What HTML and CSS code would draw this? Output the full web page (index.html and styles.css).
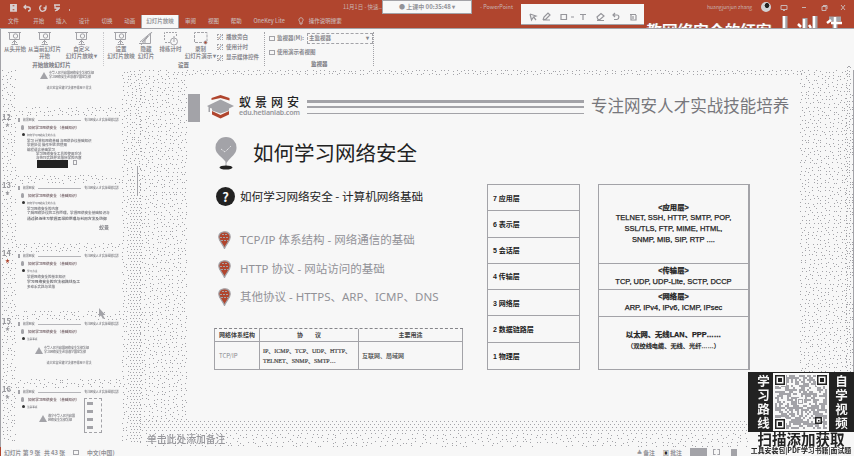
FILE: index.html
```html
<!DOCTYPE html>
<html lang="zh-CN">
<head>
<meta charset="utf-8">
<title>PowerPoint</title>
<link rel="stylesheet" href="styles.css">
</head>
<body>
<svg width="0" height="0" class="defs">
  <defs>
    <g id="screen" fill="none" stroke="#a3a3a8"><path d="M0 .5H13M1.5 1V7.5H11.5V1M6.5 8V12M3.5 12.5H10M4 11l2-2M9 11L7 9"/><circle cx="7.500" cy="4" r="2.200"/></g>
    <g id="balloon"><path fill="#b0452e" stroke="#a3a3a8" stroke-width="1.200" d="M6.500 .8C3 .8 .8 3 .8 6c0 4 3.500 6 5.700 11.500C8.700 12 12.200 10 12.200 6c0-3-2.200-5.200-5.700-5.200z"/><path stroke="#a3a3a8" stroke-width="1.200" stroke-dasharray="2 1" d="M2 6.500H11M4 3.500H9M3 9.500H10"/></g>
  </defs>
</svg>
<div class="app">
  <header class="top">
    <div class="quick">
      <svg width="70" height="10" fill="none" stroke="#d8cfd0" stroke-width="1.300"><path d="M.7 .7H6.300V7H.7zM2 1V3H5V1M2 7V4.500H5V7M16 1L14 3L16 5M14 3H18C21 3 21 7 18 7M36 1.500V4H33.500M35.500 3A3 3 0 1 1 31.500 1.500M44 1H50M45 1V4H50M47 4V7M45 7L49 5M59 6H60"/></svg>
      <span class="doc">11月1日 - 快速...</span><span class="docapp">- PowerPoint</span>
      <span class="user">huangjunjun zhang</span>
      <span class="avatar"></span>
      <svg class="winbtns" width="66" height="8" fill="none" stroke="#c9b5b3"><path d="M1 1.500H7V5.500H1zM3 6.500H5M22 3.500H26M42 2.500H46V6.500H42zM43 1.500H47V5M61 1L65 6M65 1L61 6"/></svg>
    </div>
    <nav class="tabs">
      <span>文件</span><span>开始</span><span>插入</span><span>设计</span><span>切换</span><span>动画</span><span class="active">幻灯片放映</span><span>审阅</span><span>视图</span><span>帮助</span><span class="onekey">OneKey Lite</span>
      <svg width="6" height="8" fill="none" stroke="#c9b5b3"><path d="M2 5C0 3 1 .8 3 .8S6 3 4 5V7H2z"/></svg><span class="tell">操作说明搜索</span>
    </nav>
    <div class="banner"><span>教网络安全的红客</span>
      <svg width="66" height="14"><path stroke="#a3a3a8" stroke-width="5" d="M5 1V14M25 3V14M35 1V14M49 4H61M55 3V14"/><path stroke="#fff" stroke-width="2.500" d="M4 1V14M24 4V14M18 9l3 3M29 10l2 3M34 1V14M47 8l4-3M55 2V14M51 8H62"/></svg></div>
  </header>
  <div class="meeting">● 上课中 00:35:48 ▾</div>
  <div class="annot"><svg width="123" height="20" fill="none" stroke="#96969b" stroke-width="1.200"><path d="M9 10L15 12L12.500 13L15 16M9 10L10.500 16L12.500 13M22 16L23 13L27 9L29 11L25 15L22 16H29M40 10.500H45.500V15.500H40zM50 13H53M59 10.500H65M62 10V16M76 13L80 9.500L83 12L79 15.500H77zM76 16.500H83M94 9L92 11L94 13M92 11H96C98.500 11 98.500 15 96 15.500H93M109 10.500H115M110 11V16H115V11M112 12V15"/></svg></div>

  <section class="ribbon">
    <div class="cmd c1"><svg width="14" height="14"><use href="#screen"/></svg><p>从头开始</p></div>
    <div class="cmd c2"><svg width="14" height="14"><use href="#screen"/></svg><p>从当前幻灯片<br>开始</p><b>开始放映幻灯片</b></div>
    <div class="cmd c3"><svg width="14" height="14"><use href="#screen"/></svg><p>自定义<br>幻灯片放映 ▾</p></div>
    <i class="sep s1"></i>
    <div class="cmd c4"><svg width="14" height="14"><use href="#screen"/></svg><p>设置<br>幻灯片放映</p></div>
    <div class="cmd c5"><svg width="14" height="14" fill="none" stroke="#a3a3a8"><path d="M0 11.500H11.500V1L1 10M3 10L9 4M6 8V11M13 0L2 13"/></svg><p>隐藏<br>幻灯片</p></div>
    <div class="cmd c6"><svg width="14" height="14" fill="none" stroke="#a3a3a8"><path stroke-dasharray="2 1" d="M.5 8V.5H12.500V5M1 10.500H6"/><circle cx="10" cy="9.500" r="3.500"/><path d="M10 7V10M9 5H11"/></svg><p>排练计时</p></div>
    <div class="cmd c7"><svg width="14" height="14" fill="none" stroke="#a3a3a8"><path stroke-dasharray="3 1" d="M.5 10V.5H13V9M1 10.500H9"/><circle cx="11.500" cy="10.500" r="1.500" fill="#b0452e"/></svg><p>录制<br>幻灯片演示 ▾</p><b class="set">设置</b></div>
    <div class="checks"><p><i>✓</i>播放旁白</p><p><i>✓</i>使用计时</p><p><i>✓</i>显示媒体控件</p></div>
    <i class="sep s2"></i>
    <div class="monitor"><p><i class="mi"></i>监视器(M): <span class="select"><em>主监视器</em><em>▾</em></span></p><p class="pv"><i class="mc"></i>使用演示者视图</p><b>监视器</b></div>
    <i class="sep s3"></i>
    <svg class="fold" width="6" height="4" fill="none" stroke="#a3a3a8"><path d="M1 3L3 1L5 3"/></svg>
  </section>

  <main class="work">
    <canvas class="grain" width="854" height="377"></canvas>
    <aside class="thumbs">
      <div class="row first"><div class="num"></div><div class="thumb t11"><div class="warn"><svg width="8" height="8"><path d="M4 0L8 7H0z" fill="#a3a3a8"/></svg><p>中华人民共和国网络安全法律法规<br>学习网络安全必须遵守国家法律</p></div><p class="cen">请大家自觉遵守法律不得用于非法</p></div></div>
      <div class="row"><div class="num">12<i>★</i></div><div class="thumb"><div class="th"><span>蚁景网安</span><u></u><span>专注网安人才实战技能培养</span></div><h4>如何学习网络安全 （基础知识）</h4><h5>如何学习网络安全的方法</h5><p>学习 计算机网络基础 与网络协议基础知识</p><p>掌握协议 操作系统 的使用</p><p>编程语言基础学习</p><p class="in">学习网络安全工具的使用方法</p><p class="in">与技巧实践并总结所学的内容</p><div class="dark"><i></i><u></u></div></div></div>
      <div class="row"><div class="num">13<i>★</i></div><div class="thumb"><div class="th"><span>蚁景网安</span><u></u><span>专注网安人才实战技能培养</span></div><h4>如何学习网络安全 （基础知识）</h4><h5>如何学习网络安全的方法</h5><p>学习网络安全的内容</p><p class="wide">了解网络协议的工作原理，掌握网络安全基础知识与</p><p class="wide strong">通过靶场练习掌握漏洞的原理与利用方法及防御</p><p class="end">蚁景</p></div></div>
      <div class="row"><div class="num">14<i class="red">★</i></div><div class="thumb"><div class="th"><span>蚁景网安</span><u></u><span>专注网安人才实战技能培养</span></div><h4>如何学习网络安全 （基础知识）</h4><h5>学习方法</h5><p>掌握网络安全的基本知识</p><p class="strong">学习网络安全的方法和路线及工</p><p>多动手实践与总结</p></div></div>
      <div class="row"><div class="num">15<i>★</i></div><div class="thumb"><div class="th"><span>蚁景网安</span><u></u><span>专注网安人才实战技能培养</span></div><h4>如何学习网络安全 （基础知识）</h4><h5>注意事项</h5><div class="warn"><svg width="8" height="8"><path d="M4 0L8 7H0z" fill="#a3a3a8"/></svg><p>中华人民共和国网络安全法律法规<br>学习网络安全必须遵守国家法律</p></div><p class="cen">请大家自觉遵守法律不得用于非法</p></div></div>
      <div class="row"><div class="num">16<i>★</i></div><div class="thumb t16"><div class="th"><span>蚁景网安</span><u></u><span>专注网安人才实战技能培养</span></div><h4>如何学习网络安全 （基础知识）</h4><h5>注意事项</h5><div class="warn"><svg width="8" height="8"><path d="M4 0L8 7H0z" fill="#a3a3a8"/></svg><p>遵守中华人民共和国<br>网络安全法律法规</p></div><div class="menu"><i></i><i></i><i></i><i></i></div></div></div>
    </aside>
    <div class="scroll"></div>
    <svg class="cursor" width="8" height="12"><path d="M1 0V9L3 7.500L5 11L6.500 10L5 7H7.500z" fill="#a3a3a8"/></svg>
    <div class="stage">
      <article class="slide">
        <div class="head">
          <i class="block"></i>
          <svg width="27" height="24"><path fill="#b0452e" d="M4.500 5V3L13.500 0L22.500 3V5.500L13.500 3zM5 16L13.500 20L22 16V19.500L13.500 23.500L5 19.500z"/><path fill="#a3a3a8" d="M0 11L13.500 4.500L27 11L22 13.500V15.500L13.500 18.500L5 15.500V13.500L3 13V17H1.500V12z"/></svg>
          <div class="brand"><strong>蚁景网安</strong><span>edu.hetianlab.com</span></div>
          <div class="lines"><i></i><i></i><i></i></div>
          <div class="slogan">专注网安人才实战技能培养</div>
        </div>
        <div class="title"><svg width="22" height="34"><path fill="#a3a3a8" d="M11 0a10.500 10.500 0 0 1 10.500 11c0 6-5 8-10 15C6.500 19 .5 17 .5 11A10.500 10.500 0 0 1 11 0zM10.500 25h1v4h-1z"/><path fill="none" stroke="#f7f7f7" stroke-dasharray="1 1" d="M6 12L10 15L16 9"/><ellipse cx="11" cy="30.500" rx="6.500" ry="2" fill="#222"/></svg><h1>如何学习网络安全</h1></div>
        <div class="body">
          <div class="left">
            <h2><span class="q">?</span><span class="qt">如何学习网络安全 - 计算机网络基础</span></h2>
            <ul>
              <li><svg width="13" height="18"><use href="#balloon"/></svg><span>TCP/IP 体系结构 - 网络通信的基础</span></li>
              <li><svg width="13" height="18"><use href="#balloon"/></svg><span>HTTP 协议 - 网站访问的基础</span></li>
              <li><svg width="13" height="18"><use href="#balloon"/></svg><span>其他协议 - HTTPS、ARP、ICMP、DNS</span></li>
            </ul>
            <div class="table">
              <div class="c h">网络体系结构</div><div class="c h">协&emsp;&emsp;议</div><div class="c h">主要用途</div>
              <div class="c tcp">TCP/IP</div><div class="c proto">IP、ICMP、TCP、UDP、HTTP、<br>TELNET、SNMP、SMTP…</div><div class="c use">互联网、局域网</div>
            </div>
          </div>
          <div class="osi"><div>7 应用层</div><div>6 表示层</div><div>5 会话层</div><div>4 传输层</div><div>3 网络层</div><div>2 数据链路层</div><div>1 物理层</div></div>
          <div class="stack">
            <div class="a"><b>&lt;应用层&gt;</b><span>TELNET, SSH, HTTP, SMTP, POP,</span><span>SSL/TLS, FTP, MIME, HTML,</span><span>SNMP, MIB, SIP, RTP ....</span></div>
            <div class="b"><b>&lt;传输层&gt;</b><span>TCP, UDP, UDP-Lite, SCTP, DCCP</span></div>
            <div class="b"><b>&lt;网络层&gt;</b><span>ARP, IPv4, IPv6, ICMP, IPsec</span></div>
            <div class="d"><b>以太网、无线LAN、PPP……</b><small>（双绞线电缆、无线、光纤……）</small></div>
          </div>
        </div>
      </article>
      <div class="notes">单击此处添加备注</div>
    </div>
  </main>
  <footer class="status"><span class="n1">幻灯片 第 9 张</span><span class="n2">共 43 张</span><i class="ic"></i><span class="n3">中文(中国)</span><span class="r1">≜ 备注</span><span class="r2"><b>▣</b> 批注</span><i class="v1"></i><i class="v2"></i><i class="v3"></i></footer>
  <div class="promo">
    <div class="code"><span>学习路线</span><canvas class="qr" width="56" height="58"></canvas><span>自学视频</span></div>
    <div class="scan">扫描添加获取</div>
    <div class="pack">工具安装包|PDF学习书籍|面试题</div>
  </div>
</div>
<script src="script.js"></script>
</body>
</html>
```
FILE: styles.css
```css
* { box-sizing: border-box; margin: 0; padding: 0; }
body { width: 854px; height: 456px; overflow: hidden; background: #f7f7f7; color: #222; font-family: "Noto Sans CJK SC", sans-serif; }
i, em { font-style: normal; }
svg, canvas { display: block; flex: none; }
.defs { position: absolute; }
.app { position: relative; width: 854px; height: 456px; display: flex; flex-direction: column; overflow: hidden; white-space: nowrap; }
.top { position: relative; height: 29px; background: #b0452e; border-bottom: 1px solid #a3a3a8; overflow: hidden; color: #c9b5b3; flex: none; }
.quick { height: 15px; padding: 4px 0 0 10px; display: flex; font-size: 5.500px; line-height: 6px; }
.doc { margin-left: 263px; width: 137px; }
.docapp { width: 227px; }
.user { width: 54px; font-size: 5px; }
.avatar { width: 10px; height: 10px; margin-top: -2px; border-radius: 50%; background: radial-gradient(circle at 60% 35%, #222 0 25%, #d2d2d5 30%); margin-right: 9px; }
.tabs { height: 13px; display: flex; font-size: 5.500px; line-height: 13px; padding-left: 8px; }
.tabs span { width: 22.600px; margin-right: .2px; font-weight: 500; }
.tabs span:first-child { width: 25px; }
.tabs .active { width: 38px; background: #f7f7f7; color: #96969b; text-align: center; margin: 0 6px 0 -6px; font-weight: 700; height: 14px; border: 1px solid #a3a3a8; border-width: 0 1px; }
.tabs .onekey { width: 44px; }
.tabs svg { margin-top: 2px; }
.tabs .tell { margin-left: 5px; width: 50px; }
.banner { position: absolute; left: 646px; top: 15px; display: flex; color: #fff; font-size: 15.700px; line-height: 16px; font-weight: 700; height: 14px; text-shadow: 1px 0 #a3a3a8; }
.banner span { margin-top: 8px; width: 134px; font-weight: 500; }
.meeting { position: absolute; left: 382px; top: 0; width: 90px; height: 14px; background: #f7f7f7; border: 1px solid #a3a3a8; color: #929297; text-align: center; font-size: 6px; line-height: 12px; font-weight: 700; }
.annot { position: absolute; left: 521px; top: 4px; width: 123px; height: 21px; background: #f7f7f7; border-bottom: 1px solid #a3a3a8; }
.ribbon { height: 41px; display: flex; flex: none; padding: 3px 0 0 1px; color: #88888e; font-size: 5.500px; line-height: 7px; font-weight: 700; box-shadow: inset 1px 0 #a3a3a8; position: relative; }
.cmd { display: flex; flex-direction: column; align-items: center; text-align: center; flex: none; height: 37px; }
.cmd p { height: 15px; }
.cmd b, .monitor b { margin-top: 1px; }
.c1 { width: 28px; } .c2 { width: 31px; } .c2 b { margin-left: 14px; } .c3 { width: 43px; }
.c4 { width: 34px; } .c5 { width: 16px; } .c6 { width: 33px; } .c7 { width: 27px; } .set { align-self: flex-start; margin-left: -9px; }
.sep { width: 0; height: 34px; border-left: 1px dotted #a3a3a8; flex: none; }
.s1 { border-color: #c9c9cc; }
.checks { margin-left: 3px; width: 47px; }
.checks p { height: 10.300px; display: flex; align-items: center; }
.checks i { width: 6px; height: 6px; border: 1px dotted #a3a3a8; line-height: 4px; font-size: 5px; margin-right: 3px; }
.monitor { margin-left: 4px; width: 104px; display: flex; flex-direction: column; height: 37px; }
.monitor p { height: 13px; display: flex; align-items: center; }
.mi, .mc { width: 6px; height: 5px; border: 1px solid #a3a3a8; margin-right: 2px; }
.select { margin-left: auto; width: 66px; height: 11px; display: flex; justify-content: space-between; align-items: center; border: 1px dashed #a3a3a8; padding: 0 3px 0 1px; }
.monitor .pv { margin-top: 1px; } .monitor b { margin: 2px 0 0 42px; }
.fold { position: absolute; right: 2px; bottom: 1px; }
.work { position: relative; height: 377px; display: flex; flex: none; }
.grain { position: absolute; left: 0; top: 0; }
.thumbs { position: relative; width: 136px; height: 377px; overflow: hidden; }
.row { display: flex; height: 59px; margin-bottom: 9px; }
.first { height: 37px; }
.num { width: 16px; padding-left: 2px; color: #96969b; font-size: 7.500px; line-height: 7px; font-weight: 700; margin-top: -3px; flex: none; }
.num i { display: block; font-size: 5px; padding-left: 3px; line-height: 7px; } .num .red { color: #b0452e; }
.thumb { width: 105px; height: 59px; background: #f7f7f7; color: #88888d; font-size: 3.600px; line-height: 4.500px; font-weight: 700; padding: 2px 2px 0 11px; position: relative; overflow: hidden; }
.first .thumb { height: 37px; padding-top: 5px; }
.th { display: flex; align-items: center; margin-left: -9px; border-left: 2px solid #a3a3a8; padding-left: 3px; height: 4px; font-size: 2.900px; }
.th u { flex: 1; height: 1px; background: #b5b5b9; margin: 0 3px; }
.thumb h4 { font-size: 3.600px; line-height: 5px; margin-top: 3px; color: #85757a; display: flex; white-space: pre; }
.thumb h4::before { content: ""; width: 3px; height: 5px; border-radius: 2px; background: #a3a3a8; margin: 0 4px 0 -6px; }
.thumb h5 { font-size: 2.600px; line-height: 4px; margin: 2.500px 0 2px -2px; display: flex; }
.thumb h5::before { content: ""; width: 3px; height: 3px; border-radius: 50%; background: #333; margin: .5px 2px 0 -3px; }
.thumb > p { font-size: 3.500px; line-height: 4.500px; }
.thumb .in { margin-left: 9px; line-height: 3.600px; } .thumb .wide { font-size: 3.600px; } .thumb .strong { color: #78787d; font-size: 3.800px; line-height: 5.500px; }
.thumb .end { text-align: right; padding-right: 10px; margin-top: 4px; font-size: 5px; }
.dark { display: flex; margin: 1px 0 0 10px; } .dark i { width: 31px; height: 8px; background: #222; margin-right: 5px; } .dark u { width: 4px; height: 5px; border: 1px solid #a3a3a8; }
.warn { display: flex; margin: 6px 0 0 8px; align-items: center; } .warn svg { margin-right: 1px; } .warn p { line-height: 3.800px; font-size: 3px; }
.first .warn { margin-top: -3px; margin-left: 13px; } .thumb .cen { text-align: center; margin-top: 6px; padding-right: 8px; font-size: 3px; }
.t16 .warn { margin: 6px 0 0 12px; }
.menu { position: absolute; left: 68px; top: 10px; width: 18px; height: 35px; background: #f7f7f7; border: 1px dashed #a3a3a8; border-left: 1px solid #a3a3a8; display: flex; flex-direction: column; justify-content: space-around; padding-left: 2px; }
.menu i { width: 6px; height: 3px; background: #a3a3a8; }
.scroll { position: relative; width: 2px; height: 29px; background: #f7f7f7; border-right: 1px solid #a3a3a8; margin-top: 96px; }
.cursor { position: absolute; left: 98px; top: 238px; }
.stage { position: relative; margin-left: 49px; padding-top: 5px; width: 613px; }
.slide { width: 613px; height: 345px; background: #f7f7f7; padding: 19px 0 0 1px; }
.head { display: flex; height: 43px; }
.block { width: 12px; height: 28px; background: #a3a3a8; margin-right: 7px; }
.head svg { margin-top: 1px; }
.brand { width: 60px; margin: 0 8px 0 5px; }
.brand strong { display: block; font-size: 12px; letter-spacing: 4px; line-height: 15px; font-weight: 500; width: 66px; }
.brand span { display: block; color: #96969b; font: 600 7px/8px "Noto Sans", sans-serif; letter-spacing: -.17px; }
.lines { width: 277px; padding-top: 6px; } .lines i { display: block; background: #a3a3a8; height: 3px; margin-bottom: 3px; } .lines i + i { height: 2px; margin-bottom: 5px; } .lines i + i + i { height: 1px; }
.slogan { margin-left: 7px; font-size: 16.550px; line-height: 23px; color: #77777c; }
.title { display: flex; height: 47px; padding-left: 27px; } .title h1 { font-size: 20.500px; line-height: 31px; font-weight: 400; margin-left: 16px; }
.body { display: flex; }
.left { width: 299px; padding-left: 26px; flex: none; }
.left h2 { display: flex; align-items: center; height: 24px; font-size: 11.600px; font-weight: 400; padding-left: 2px; }
.q { width: 19px; height: 19px; border-radius: 50%; background: #222; color: #f7f7f7; text-align: center; font-weight: 700; font-size: 13px; line-height: 19px; margin-right: 5px; }
ul { list-style: none; margin-top: 18px; height: 102px; } li { display: flex; height: 28.500px; align-items: center; padding-left: 4px; font-family: "Noto Sans", "Noto Sans CJK SC", sans-serif; font-size: 11.500px; color: #929297; } li span { margin-left: 9px; line-height: 18px; }
.table { display: grid; grid-template-columns: 45px 99px 104px; grid-template-rows: 13px 28px; width: 249px; border-left: 1px solid #a3a3a8; border-top: 1px dashed #85858a; color: #444; font-size: 6px; line-height: 10px; }
.c { border-right: 1px solid #a3a3a8; border-bottom: 1px solid #a3a3a8; display: flex; align-items: center; } .h { justify-content: center; font-weight: 700; } .tcp { padding-left: 4px; color: #88888d; } .proto, .use { padding-left: 3px; font-weight: 500; }
.proto { font-family: "Liberation Serif", "Noto Sans CJK SC", serif; -webkit-text-stroke: .2px #444; }
.osi { width: 93px; height: 186px; margin: 0 18px 0 0; display: grid; grid-template-rows: repeat(7, 1fr); border: 1px solid #a3a3a8; flex: none; }
.osi div { border-bottom: 1px solid #a3a3a8; padding-left: 5px; display: flex; align-items: center; font-size: 7px; font-weight: 700; } .osi div:last-child { border: 0; }
.osi, .stack { font-family: "Liberation Sans", "Noto Sans CJK SC", sans-serif; }
.stack { width: 152px; height: 186px; display: grid; grid-template-rows: 79px 26px 27px 1fr; border: 1px solid #a3a3a8; border-right-width: 2px; text-align: center; font-size: 7.500px; flex: none; }
.stack div { border-bottom: 1px solid #a3a3a8; display: flex; flex-direction: column; justify-content: center; line-height: 10.600px; -webkit-text-stroke: .25px #222; } .stack div:last-child { border: 0; padding-bottom: 4px; }
.stack b { font-size: 7.300px; } .stack small { font-size: 6.200px; }
.notes { position: absolute; left: -40px; top: 362px; font-size: 9.800px; line-height: 14px; color: #96969b; font-weight: 500; }
.status { height: 9px; display: flex; flex: none; font-size: 5.800px; line-height: 7px; color: #929297; font-weight: 700; padding-top: 2px; padding-left: 3px; border-left: 1px solid #b0452e; }
.status span { flex: none; } .n1 { width: 40px; } .n2 { width: 29px; } .ic { width: 6px; height: 5px; border: 1px solid #a3a3a8; margin: 1px 8px 0 0; } .n3 { width: 550px; } .r1 { width: 26px; } .r2 { width: 27px; } .r2 b { color: #222; }
.v1 { width: 17px; background: #a3a3a8; margin: -1px 6px 0 0; } .v2 { width: 7px; height: 6px; border: 1px dashed #a3a3a8; margin-right: 11px; } .v3 { width: 6px; background: #a3a3a8; }
.promo { position: absolute; left: 748px; top: 372px; width: 106px; height: 84px; background: #f7f7f7; text-align: center; }
.code { height: 60px; display: flex; background: #222; align-items: center; color: #f7f7f7; }
.code span { width: 25px; font-size: 12.500px; line-height: 14px; font-weight: 700; white-space: normal; padding: 0 6px; } .code span:first-child { padding: 0 3px 0 9px; }
.scan { font-size: 14.500px; line-height: 14px; height: 14px; font-weight: 700; } .pack { font-size: 6.900px; line-height: 9px; font-weight: 700; }
```
FILE: script.js
```js
let seed = 7;
const rnd = () => {
  seed = (seed + 0x6d2b79f5) | 0;
  let t = Math.imul(seed ^ (seed >>> 15), 1 | seed);
  t = (t + Math.imul(t ^ (t >>> 7), 61 | t)) ^ t;
  return ((t ^ (t >>> 14)) >>> 0) / 4294967296;
};

// Sparse dot texture of the grey workspace
const g = document.querySelector('.grain').getContext('2d');
const dots = (x0, y0, x1, y1, sx, sy, jitter) => {
  for (let y = y0; y < y1; y += sy)
    for (let x = x0; x < x1; x += sx) {
      const px = x + (jitter ? Math.floor(rnd() * (sx - 1)) : (Math.round((y - y0) / sy) % 2) * Math.floor(sx / 2));
      const py = y + (jitter ? Math.floor(rnd() * (sy - 1)) : 0);
      g.fillRect(px, py, 1, 1);
    }
};
g.fillStyle = '#a3a3a8';
dots(2, 0, 130, 372, 4, 4, true);
dots(130, 0, 140, 110, 4, 3, true);
dots(130, 110, 140, 372, 3, 3, false);
dots(140, 0, 187, 350, 4, 4, true);
dots(187, 0, 800, 5, 4, 3, true);
dots(800, 0, 846, 350, 4, 4, true);
dots(846, 0, 853, 350, 3, 3, true);
dots(140, 351, 748, 362, 4, 3, false);
dots(140, 363, 748, 377, 5, 4, true);
g.fillRect(0, 0, 1, 377);
g.fillRect(853, 0, 1, 302);

// Code symbol
const q = document.querySelector('.qr').getContext('2d');
q.fillStyle = '#f7f7f7';
q.fillRect(0, 0, 56, 58);
q.fillStyle = '#a3a3a8';
for (let y = 2; y < 56; y += 2)
  for (let x = 2; x < 54; x += 2)
    if (rnd() < 0.6) q.fillRect(x, y, 2, 2);
const box = (x, y, s, c) => { q.fillStyle = c; q.fillRect(x, y, s, s); };
[[2, 2], [44, 2], [2, 46]].forEach(([x, y]) => {
  box(x - 1, y - 1, 12, '#f7f7f7');
  box(x, y, 10, '#222');
  box(x + 1.5, y + 1.5, 7, '#f7f7f7');
  box(x + 3, y + 3, 4, '#222');
});
box(42, 44, 7, '#222'); box(43.500, 45.500, 4, '#f7f7f7'); box(45, 47, 1.500, '#222');
box(24, 25, 7, '#f7f7f7'); box(25, 26, 5, '#a3a3a8'); box(26, 27, 3, '#f7f7f7');
```
